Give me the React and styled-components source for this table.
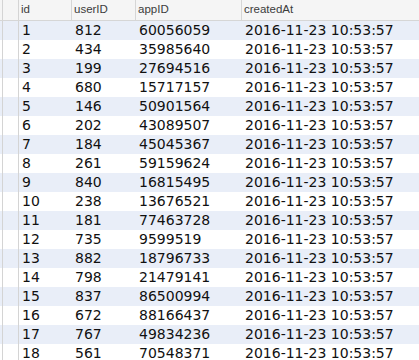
import React from "react";
import styled, { createGlobalStyle } from "styled-components";

const GlobalStyle = createGlobalStyle`
	body {
		margin: 0;
		background: #ffffff;
	}
`;

const rows = [
	[1, 812, 60056059],
	[2, 434, 35985640],
	[3, 199, 27694516],
	[4, 680, 15717157],
	[5, 146, 50901564],
	[6, 202, 43089507],
	[7, 184, 45045367],
	[8, 261, 59159624],
	[9, 840, 16815495],
	[10, 238, 13676521],
	[11, 181, 77463728],
	[12, 735, 9599519],
	[13, 882, 18796733],
	[14, 798, 21479141],
	[15, 837, 86500994],
	[16, 672, 88166437],
	[17, 767, 49834236],
	[18, 561, 70548371],
];

const columns = ["id", "userID", "appID", "createdAt"];

const Grid = styled.div`
	width: 419px;
	height: 360px;
	overflow: hidden;
`;

const Row = styled.div`
	display: grid;
	grid-template-columns: 19px 53px 64px 106px 1fr;
	height: ${(p) => (p.$header ? "21px" : "19px")};
	box-sizing: border-box;
	background: ${(p) => (p.$header ? "#f5f5f5" : p.$striped ? "#e9eef8" : "#ffffff")};
	border-bottom: ${(p) => (p.$header ? "1px solid #d6d6d6" : "none")};
`;

const Gutter = styled.div`
	margin-left: 2px;
	border-left: 1px solid #d4d4d4;
	border-right: 1px solid #d4d4d4;
`;

const HeadCell = styled.div`
	padding-left: 2px;
	border-right: ${(p) => (p.$last ? "none" : "1px solid #d6d6d6")};
	font-family: "Liberation Sans", Arial, sans-serif;
	font-size: 11.5px;
	line-height: 19px;
	color: #3c3c3c;
`;

const Cell = styled.div`
	padding-left: 3px;
	font-family: "DejaVu Sans", Verdana, sans-serif;
	font-size: 14px;
	line-height: 19px;
	color: #111111;
	white-space: nowrap;
`;

export default function App() {
	return (
		<>
			<GlobalStyle />
			<Grid>
				<Row $header>
					<Gutter />
					{columns.map((c, i) => (
						<HeadCell key={c} $last={i === columns.length - 1}>
							{c}
						</HeadCell>
					))}
				</Row>
				{rows.map(([id, user, app], i) => (
					<Row key={id} $striped={i % 2 === 0}>
						<Gutter />
						<Cell>{id}</Cell>
						<Cell>{user}</Cell>
						<Cell>{app}</Cell>
						<Cell>2016-11-23 10:53:57</Cell>
					</Row>
				))}
			</Grid>
		</>
	);
}
